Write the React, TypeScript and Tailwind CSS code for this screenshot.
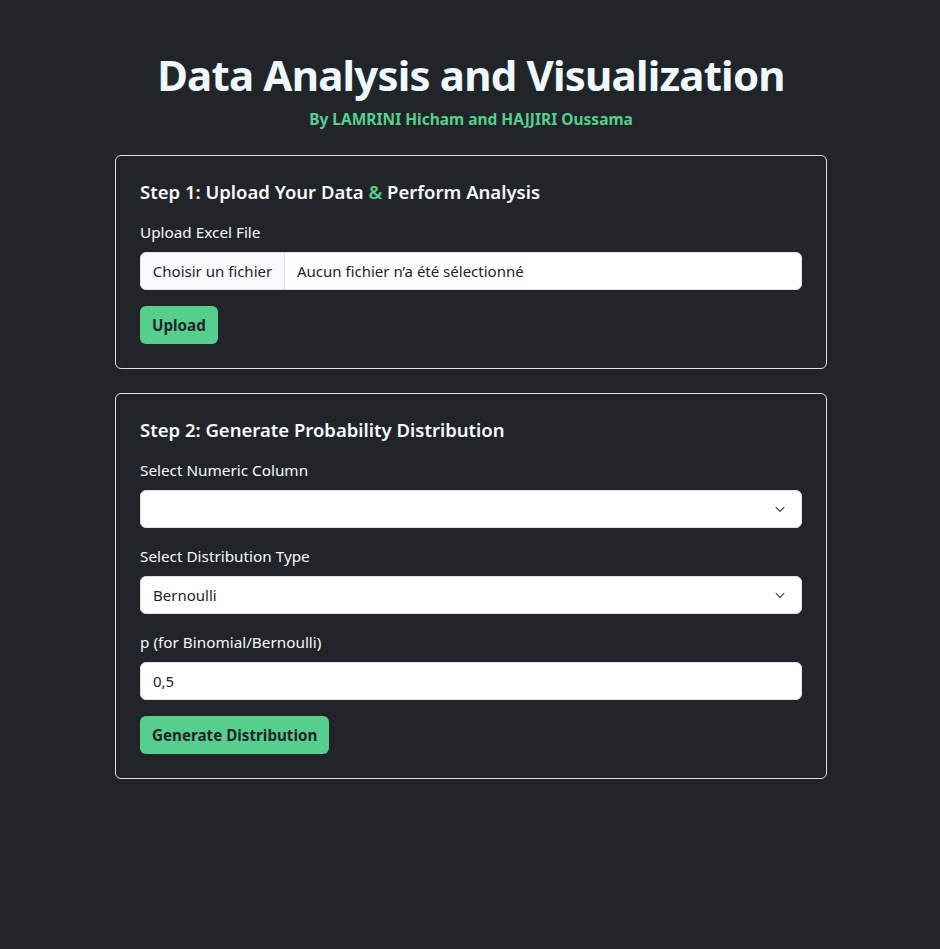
import React from "react";

const Chevron = () => (
  <svg
    width="16"
    height="16"
    viewBox="0 0 16 16"
    className="pointer-events-none absolute right-[13px] top-1/2 -translate-y-1/2"
  >
    <path
      d="M3 6l5 5 5-5"
      fill="none"
      stroke="#343a40"
      strokeWidth="1.4"
      strokeLinecap="round"
      strokeLinejoin="round"
      transform="translate(1.6 1.6) scale(0.8)"
    />
  </svg>
);

const Label = ({ children }: { children: React.ReactNode }) => (
  <label className="block mb-2 text-[15.3px] leading-6 text-[#f8f9fa]">{children}</label>
);

const SelectBox = ({ value }: { value: string }) => (
  <div className="relative mb-4 h-[38px] rounded-[6px] border border-[#dee2e6] bg-white">
    <div className="px-3 leading-[36px] text-[15px] text-[#212529]">{value}</div>
    <Chevron />
  </div>
);

const Button = ({ children }: { children: React.ReactNode }) => (
  <button className="h-[38px] rounded-[6px] bg-[#56cf8e] px-3 text-[15.2px] font-bold text-[#212529]">
    {children}
  </button>
);

export default function App() {
  return (
    <div
      className="min-h-[949px] bg-[#212529] pt-[48px]"
      style={{ fontFamily: '"Noto Sans", "Open Sans", sans-serif' }}
    >
      <div className="ml-[115px] w-[712px]">
        <h1 className="text-center text-[42px] font-bold leading-[53px] tracking-[-0.8px] text-[#eef8fd]">
          Data Analysis and Visualization
        </h1>
        <p className="mt-[7px] text-center text-[15.5px] font-bold leading-[22px] text-[#56cf8e]">
          By LAMRINI Hicham and HAJJIRI Oussama
        </p>

        {/* step 1 */}
        <div className="mt-[25px] rounded-[6px] border border-[#dee2e6] p-6">
          <h2 className="mb-4 text-[18.5px] font-semibold leading-6 text-[#f8f9fa]">
            Step 1: Upload Your Data <span className="text-[#56cf8e]">&amp;</span> Perform Analysis
          </h2>
          <Label>Upload Excel File</Label>
          <div className="mb-4 flex h-[38px] overflow-hidden rounded-[6px] border border-[#dee2e6] bg-white text-[15px] text-[#212529]">
            <div className="flex w-[144px] items-center justify-center border-r border-[#dee2e6] bg-[#f8f9fa]">
              Choisir un fichier
            </div>
            <div className="flex items-center px-3">Aucun fichier n’a été sélectionné</div>
          </div>
          <Button>Upload</Button>
        </div>

        {/* step 2 */}
        <div className="mt-6 rounded-[6px] border border-[#dee2e6] p-6">
          <h2 className="mb-4 text-[18.5px] font-semibold leading-6 text-[#f8f9fa]">
            Step 2: Generate Probability Distribution
          </h2>
          <Label>Select Numeric Column</Label>
          <SelectBox value="" />
          <Label>Select Distribution Type</Label>
          <SelectBox value="Bernoulli" />
          <Label>p (for Binomial/Bernoulli)</Label>
          <div className="mb-4 h-[38px] rounded-[6px] border border-[#dee2e6] bg-white px-3 text-[15px] leading-[36px] text-[#212529]">
            0,5
          </div>
          <Button>Generate Distribution</Button>
        </div>
      </div>
    </div>
  );
}
